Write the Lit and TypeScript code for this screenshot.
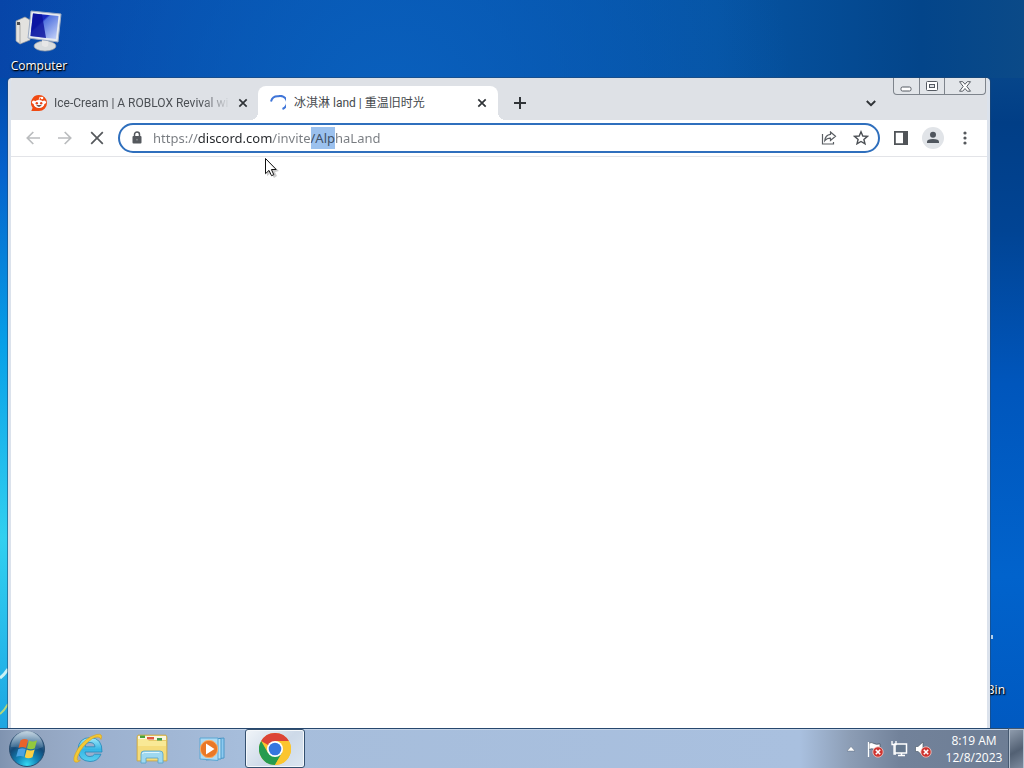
import { LitElement, html, css, svg } from "lit";
import { customElement, query } from "lit/decorators.js";

const closeIcon = html`<svg width="10" height="10" viewBox="0 0 10 10" aria-hidden="true">
  <path d="M1.3 1.3 8.7 8.7M8.7 1.3 1.3 8.7" stroke="#303438" stroke-width="1.7" fill="none" />
</svg>`;

const redBadge = svg`
  <circle cx="12" cy="12" r="5.2" fill="#cf3430" stroke="#f4c9c4" stroke-width=".8" />
  <path d="M9.8 9.8l4.4 4.4m0-4.4l-4.4 4.4" stroke="#fff" stroke-width="1.6" />`;

@customElement("browser-window")
class BrowserWindow extends LitElement {
  @query("input") address!: HTMLInputElement;

  static styles = css`
    :host {
      display: flex;
      flex-direction: column;
      box-sizing: border-box;
      border: solid #dbe2ec;
      border-width: 0 3px;
      border-radius: 4px 4px 0 0;
      background: #fff;
      box-shadow: 0 0 0 1px #24476f90;
      overflow: hidden;
    }
    button {
      border: 0;
      padding: 0;
      margin: 0;
      background: none;
      display: grid;
      place-items: center;
      flex: none;
      font: inherit;
    }
    svg {
      display: block;
      flex: none;
    }
    .strip {
      display: flex;
      background: #dee1e6;
      height: 42px;
      margin: 0 -3px;
      padding-left: 12px;
      flex: none;
    }
    .tabs {
      display: flex;
      align-items: flex-end;
      flex: 1;
      min-width: 0;
    }
    .tab {
      position: relative;
      display: flex;
      align-items: center;
      box-sizing: border-box;
      width: 240px;
      height: 34px;
      padding: 0 10px 0 12px;
      gap: 8px;
      font: 12px "Roboto", "Noto Sans CJK SC", sans-serif;
      color: #4b4f54;
    }
    .tab.idle {
      width: 238px;
      padding: 0 9px 0 11px;
      gap: 7px;
    }
    .tab.active {
      background: #fff;
      border-radius: 8px 8px 0 0;
      color: #45494d;
    }
    .tab.active::before,
    .tab.active::after {
      content: "";
      position: absolute;
      bottom: 0;
      width: 8px;
      height: 8px;
    }
    .tab.active::before {
      right: 100%;
      background: radial-gradient(circle at 0 0, transparent 8px, #fff 8px);
    }
    .tab.active::after {
      left: 100%;
      background: radial-gradient(circle at 100% 0, transparent 8px, #fff 8px);
    }
    .title {
      flex: 1;
      min-width: 0;
      overflow: hidden;
      white-space: nowrap;
      line-height: 20px;
    }
    .idle .title {
      mask-image: linear-gradient(to right, #000 calc(100% - 28px), transparent);
    }
    .tab button {
      width: 12px;
      height: 16px;
    }
    .new {
      width: 28px;
      height: 34px;
      margin-left: 8px;
    }
    .search {
      width: 28px;
      height: 28px;
      margin: 11px 8px 0 0;
    }
    .caption {
      display: flex;
      box-sizing: border-box;
      height: 17px;
      margin-right: 4px;
      border: 1px solid #7e848c;
      border-top: 0;
      border-radius: 0 0 4px 4px;
      background: #e2e5e9;
    }
    .caption button {
      width: 25px;
    }
    .caption button + button {
      border-left: 1px solid #7e848c;
    }
    .caption .shut {
      width: 41px;
    }
    .toolbar {
      display: flex;
      align-items: center;
      height: 36px;
      flex: none;
      padding: 0 6px;
      border-bottom: 1px solid #e3e4e8;
    }
    .toolbar > button {
      width: 32px;
      height: 32px;
    }
    .omnibox {
      display: flex;
      align-items: center;
      flex: 1;
      min-width: 0;
      box-sizing: border-box;
      height: 30px;
      margin: 0 5px;
      padding: 0 5px 0 11px;
      gap: 8px;
      border: 2px solid #2f6fbd;
      border-radius: 16px;
    }
    .omnibox > svg {
      margin-right: 2px;
    }
    .omnibox > button {
      width: 24px;
      height: 24px;
    }
    input {
      flex: 1;
      min-width: 0;
      height: 22px;
      border: 0;
      outline: 0;
      padding: 0;
      font: 13px/22px "Noto Sans", "Open Sans", sans-serif;
      caret-color: transparent;
      color: #70757a;
      -webkit-text-fill-color: transparent;
      background: linear-gradient(to right, #777b80 45px, #24272b 45px 119px, #777b80 119px);
      background-clip: text;
      -webkit-background-clip: text;
    }
    input::selection {
      background: #9bc1ee;
      color: #3f5168;
      -webkit-text-fill-color: #3f5168;
    }
    main {
      flex: 1;
      background: #fff;
    }
  `;

  firstUpdated() {
    this.address.focus();
    const start = this.address.value.indexOf("/Alp");
    this.address.setSelectionRange(start, start + 4);
  }

  render() {
    return html`
      <div class="strip">
        <div class="tabs" role="tablist">
          <div class="tab idle" role="tab" aria-selected="false">
            <svg width="16" height="16" viewBox="0 0 16 16" aria-hidden="true">
              <path d="M8 0a8 8 0 0 0-6.4 12.8L.3 16H8A8 8 0 0 0 8 0Z" fill="#f04a12" />
              <circle cx="2.8" cy="7.2" r="1.8" fill="#fff" /><circle cx="13.2" cy="7.2" r="1.8" fill="#fff" />
              <circle cx="11" cy="3" r="1.3" fill="#fff" />
              <path d="M8 5.2 8.8 2.2 11 3" fill="none" stroke="#fff" stroke-width=".8" />
              <ellipse cx="8" cy="9" rx="5.4" ry="4" fill="#fff" />
              <circle cx="5.8" cy="8.3" r="1.2" fill="#e7441a" /><circle cx="10.2" cy="8.3" r="1.2" fill="#e7441a" />
              <path d="M5.2 10.3h5.6Q8 13 5.2 10.3Z" fill="#3a2522" />
            </svg>
            <span class="title">Ice-Cream | A ROBLOX Revival wi</span>
            <button aria-label="Close tab">${closeIcon}</button>
          </div>
          <div class="tab active" role="tab" aria-selected="true">
            <svg width="16" height="16" viewBox="0 0 16 16" aria-hidden="true">
              <path d="M1 6.5A7 7 0 0 1 8 1.3 6.5 6.5 0 0 1 12.500 14" fill="none" stroke="#3f75d8" stroke-width="2" />
            </svg>
            <span class="title">冰淇淋 land | 重温旧时光</span>
            <button aria-label="Close tab">${closeIcon}</button>
          </div>
          <button class="new" aria-label="New tab">
            <svg width="12" height="12" viewBox="0 0 12 12"><path d="M6 0v12M0 6h12" stroke="#303438" stroke-width="2" /></svg>
          </button>
        </div>
        <button class="search" aria-label="Search tabs">
          <svg width="10" height="7" viewBox="0 0 10 7"><path d="M.8 1 5 5.2 9.2 1" fill="none" stroke="#303438" stroke-width="2" /></svg>
        </button>
        <div class="caption">
          <button aria-label="Minimize">
            <svg width="13" height="13" viewBox="0 0 13 13"><rect x="1" y="7" width="10" height="4" rx="1.5" fill="#fff" stroke="#555a62" /></svg>
          </button>
          <button aria-label="Maximize">
            <svg width="13" height="11" viewBox="0 0 13 11">
              <rect x=".5" y=".5" width="11" height="9" rx="1" fill="#fff" stroke="#555a62" />
              <rect x="3.5" y="3.5" width="5" height="3" fill="#dee1e6" stroke="#555a62" />
            </svg>
          </button>
          <button class="shut" aria-label="Close">
            <svg width="13" height="11" viewBox="0 0 13 11">
              <path d="M.5.7h3.2L6 3.3 8.3.7h3.2L7.8 5.4l3.7 4.800H8.300L6 7.500 3.700 10.200H.5l3.700-4.800Z" fill="#fff" stroke="#555a62" />
            </svg>
          </button>
        </div>
      </div>
      <div class="toolbar">
        <button aria-label="Back">
          <svg width="14" height="14" viewBox="0 0 14 14"><path d="M14 7H1.5M7.3 1 1.3 7l6 6" fill="none" stroke="#babcbe" stroke-width="1.7" /></svg>
        </button>
        <button aria-label="Forward">
          <svg width="14" height="14" viewBox="0 0 14 14"><path d="M0 7h12.5M6.7 1l6 6-6 6" fill="none" stroke="#babcbe" stroke-width="1.7" /></svg>
        </button>
        <button aria-label="Stop">
          <svg width="14" height="14" viewBox="0 0 14 14"><path d="m1.2 1.2 11.6 11.6m0-11.6L1.2 12.8" stroke="#55585c" stroke-width="1.7" /></svg>
        </button>
        <div class="omnibox">
          <svg width="12" height="14" viewBox="0 0 12 14" aria-hidden="true">
            <path d="M3.5 6V3.6a2.5 2.5 0 0 1 5 0V6" fill="none" stroke="#55595e" stroke-width="1.5" />
            <rect x="1.5" y="5" width="9" height="7.5" rx="1" fill="#55595e" />
            <circle cx="6" cy="8.7" r=".9" fill="#888c90" />
          </svg>
          <input type="text" aria-label="Address" spellcheck="false" value="https://discord.com/invite/AlphaLand" />
          <button aria-label="Share">
            <svg width="16" height="16" viewBox="0 0 16 16">
              <path d="M1.5 4V14h11v-2M9.5 2l5 4.200-5 4.200V8.200Q6 8 3.800 10.600 4.300 5 9.500 4.400Z" fill="none" stroke="#5a5e63" stroke-width="1.2" />
            </svg>
          </button>
          <button aria-label="Bookmark">
            <svg width="16" height="16" viewBox="0 0 16 16">
              <path d="m8 1.800 1.800 4.200 4.600.4-3.500 3 1.100 4.500L8 11.500l-4 2.400 1.100-4.500-3.500-3 4.600-.4Z" fill="none" stroke="#4c5055" stroke-width="1.4" />
            </svg>
          </button>
        </div>
        <button aria-label="Side panel">
          <svg width="14" height="14" viewBox="0 0 14 14"><path d="M0 0h14v14H0Zm1.800 1.800v10.400H9V1.800Z" fill="#505458" fill-rule="evenodd" /></svg>
        </button>
        <button aria-label="Profile">
          <svg width="22" height="22" viewBox="0 0 22 22">
            <circle cx="11" cy="11" r="11" fill="#e1e4e8" />
            <circle cx="11" cy="7.800" r="3" fill="#50565e" />
            <path d="M5 16v-1.200Q5 12 11 12t6 2.800V16Z" fill="#50565e" />
          </svg>
        </button>
        <button aria-label="Menu">
          <svg width="4" height="14" viewBox="0 0 4 14" fill="#55585c"><circle cx="2" cy="2" r="1.6" /><circle cx="2" cy="7" r="1.6" /><circle cx="2" cy="12" r="1.6" /></svg>
        </button>
      </div>
      <main></main>
    `;
  }
}

@customElement("task-bar")
class TaskBar extends LitElement {
  static styles = css`
    :host {
      display: flex;
      box-sizing: border-box;
      height: 40px;
      border-top: 1px solid #2c4b6c;
      box-shadow: inset 0 1px #c5d5e9;
      background: linear-gradient(to right, #7f93b0 0, #91a3be 30px, #9cb1cf 100px, #a6bddb 240px, #a9c0df 800px, #8c9db5 850px, #72829a 900px, #6d7d94 100%);
    }
    button {
      border: 0;
      padding: 0;
      background: none;
      display: grid;
      place-items: center;
      flex: none;
    }
    svg {
      display: block;
    }
    .start {
      width: 54px;
    }
    .pin {
      width: 60px;
    }
    .first {
      width: 68px;
    }
    .open {
      width: 60px;
      margin-left: 3px;
      box-sizing: border-box;
      border: 1px solid #34506f;
      border-radius: 3px;
      background: linear-gradient(135deg, #f1f5f9, #cdd9e8 55%, #dce6f0);
      box-shadow: inset 0 0 0 1px #f5f8fb;
    }
    .tray {
      display: flex;
      align-items: center;
      margin-left: auto;
    }
    .tray button {
      width: 24px;
      height: 24px;
    }
    time {
      width: 70px;
      margin-left: 4px;
      text-align: center;
      font-size: 12px;
      line-height: 17px;
      color: #fff;
    }
    .tray .peek {
      width: 15px;
      height: 100%;
      box-sizing: border-box;
      border: solid #b3c0cf;
      border-width: 1px 1px 0;
      outline: 1px solid #465970;
      background: linear-gradient(150deg, #8e9bac, #526073 55%, #7d8b9e);
    }
  `;

  render() {
    return html`
      <button class="start" aria-label="Start">
        <svg width="38" height="38" viewBox="0 0 38 38">
          <defs>
            <radialGradient id="orb" cx="50%" cy="95%" r="85%">
              <stop offset="0" stop-color="#35d9f2" /><stop offset=".35" stop-color="#1387ba" />
              <stop offset=".7" stop-color="#134a78" /><stop offset="1" stop-color="#517697" />
            </radialGradient>
            <linearGradient id="gloss" x1="0" y1="0" x2="0" y2="1">
              <stop offset="0" stop-color="#e4f0f7" stop-opacity=".8" /><stop offset="1" stop-color="#9fc0d8" stop-opacity=".15" />
            </linearGradient>
          </defs>
          <circle cx="19" cy="19" r="17.5" fill="url(#orb)" stroke="#294d6f" />
          <path d="M3 17A16 16 0 0 1 35 17Q27 21 19 19T3 17Z" fill="url(#gloss)" />
          <path d="M12.500 10.500q4-2.500 7.500-.5l-2 8q-3.500-2-7.500 0Z" fill="#e8632a" />
          <path d="M21 10.500q4 2 8-.3l-2.200 8q-4 2.200-7.800.1Z" fill="#93c83e" />
          <path d="M10.200 19.200q4-2 7.500-.1l-2 7.700q-3.500-1.800-7.500 0Z" fill="#4ba3e3" />
          <path d="M18.700 19.500q4 2 8-.1l-2.200 7.800q-4 2.200-7.800.1Z" fill="#fbd045" />
        </svg>
      </button>
      <button class="pin first" aria-label="Internet Explorer">
        <svg width="32" height="34" viewBox="0 0 32 34">
          <defs><linearGradient id="ie" x1="0" y1="0" x2="0" y2="1"><stop offset="0" stop-color="#a4eafa" /><stop offset=".5" stop-color="#35b5e5" /><stop offset="1" stop-color="#5bd0ef" /></linearGradient></defs>
          <path d="M30 20H13q.3 4.500 5 4.500 3.200 0 4.500-2.300H29Q26 29.500 18 29.500 6.500 29 6 17.500 6.500 6 18 5.500 30.500 6 30 20ZM13 14.800h10q-.4-4.300-5-4.300t-5 4.300Z" fill="url(#ie)" stroke="#2587b7" stroke-width=".8" fill-rule="evenodd" />
          <path d="M29 7.500Q31.500 1 24.500 2.500 13.500 5.500 6 16.500-.5 27.500 3 30q2.500 1 5.300-1.500-4.500 1-2.500-4.500Q10 13.500 20.500 6.500 27.500 3 29 7.500Z" fill="#f4c934" stroke="#d29e23" stroke-width=".6" />
        </svg>
      </button>
      <button class="pin" aria-label="Windows Explorer">
        <svg width="34" height="32" viewBox="0 0 34 32">
          <path d="M2 4 3 2h28l1 2v24H2Z" fill="#e8cb69" stroke="#c4a449" stroke-width=".7" />
          <path d="M3 3h28v4H3Z" fill="#faf6df" />
          <path d="M5 2.500h5v2.500H5Z" fill="#49a23c" /><path d="M12 4h7v2.500h-7Z" fill="#df5840" /><path d="M22 5h5v2.500h-5Z" fill="#3f9b4a" />
          <path d="M3 6h9l2 2h17v19H3Z" fill="#f9e996" />
          <path d="M3 13h28v14H3Z" fill="#f5dc7b" />
          <path d="M6 30v-9q0-3 3-3h16q3 0 3 3v9h-5v-5H11v5Z" fill="#9ed8f0" stroke="#56a2c6" stroke-width=".8" />
          <path d="M7.500 21q0-1.500 2-1.500h15" stroke="#e0f6fd" fill="none" />
        </svg>
      </button>
      <button class="pin" aria-label="Windows Media Player">
        <svg width="30" height="28" viewBox="0 0 30 28">
          <path d="M9 4.500 27 3v20l-18 2Z" fill="#8dcaf0" stroke="#4b97c7" />
          <path d="M6 3.500h18V24H6Z" fill="#b8e1f6" stroke="#4b97c7" />
          <path d="M3 3h18v22.500L3 24Z" fill="#acdaf4" stroke="#5ba6d2" />
          <circle cx="12" cy="14" r="8.700" fill="#ea7826" stroke="#fab067" />
          <path d="M9 8.500 17.500 14 9 19.500Z" fill="#fff" />
        </svg>
      </button>
      <button class="open" aria-label="Google Chrome">
        <svg width="32" height="32" viewBox="0 0 32 32">
          <circle cx="16" cy="16" r="16" fill="#fbc52e" />
          <path d="M16 16 2.140 8A16 16 0 0 1 29.860 8H16Z" fill="#dc4437" />
          <path d="M2.140 8A16 16 0 0 0 16 32l6.930-12L16 16 9.070 20Z" fill="#269b4f" />
          <path d="M16 8h13.860A16 16 0 0 1 16 32l6.930-12Z" fill="#fbc52e" />
          <circle cx="16" cy="16" r="8" fill="#fff" /><circle cx="16" cy="16" r="6.300" fill="#3676df" />
        </svg>
      </button>
      <div class="tray">
        <button aria-label="Show hidden icons">
          <svg width="10" height="6" viewBox="0 0 10 6"><path d="M5 .5 9 5H1Z" fill="#fff" stroke="#4e5e70" stroke-width=".4" /></svg>
        </button>
        <button aria-label="Action Center">
          <svg width="18" height="18" viewBox="0 0 18 18">
            <path d="M3 3q3-1 5 .5t6 .3v6q-4 .7-6-.5t-5 .2Z" fill="#fff" stroke="#3f4b59" stroke-width=".7" /><path d="M2.500 2v15" stroke="#fff" stroke-width="1.300" />${redBadge}
          </svg>
        </button>
        <button aria-label="Network">
          <svg width="18" height="18" viewBox="0 0 18 18">
            <path d="M5 4h11.500v9H5ZM8 15.500h7M11.500 13v2.500" fill="#66788e" stroke="#fff" stroke-width="1.500" />
            <path d="M2 1v3.500h4V1M4 4.500V14h2" fill="none" stroke="#fff" stroke-width="1.300" />
          </svg>
        </button>
        <button aria-label="Volume muted">
          <svg width="18" height="18" viewBox="0 0 18 18">
            <path d="M1.500 6.500H4L9 2v14l-5-4.500H1.500Z" fill="#fff" stroke="#52606e" stroke-width=".7" />${redBadge}
          </svg>
        </button>
        <time datetime="2023-12-08T08:19">8:19 AM<br />12/8/2023</time>
        <button class="peek" aria-label="Show desktop"></button>
      </div>
    `;
  }
}

@customElement("app-root")
class AppRoot extends LitElement {
  static styles = css`
    :host {
      position: relative;
      display: flex;
      flex-direction: column;
      height: 100vh;
      overflow: hidden;
      font-family: "Open Sans", "Noto Sans", "Noto Sans CJK SC", sans-serif;
      background:
        linear-gradient(to bottom, transparent 78px, #0149aa 78px, #0561cb 22%, #07a0e8 45%, #31d0f0 70%, #25b9ea 84%, #1a9cdd 100%) 0 0 / 8px 100% no-repeat,
        linear-gradient(to bottom, transparent 78px, #06458a 78px, #013e86 16%, #014494 30%, #0056bc 50%, #0163cc 75%, #0057be 100%) 100% 0 / 34px 100% no-repeat,
        radial-gradient(ellipse at 38% 110px, #0a60bd 0, #075bb100 45%),
        linear-gradient(to right, #0745a8, #0450ac 35%, #0654a3 70%, #03458a 90%, #0b4a88);
    }
    .desktop {
      position: relative;
      flex: 1;
      min-height: 0;
    }
    .shortcut {
      position: absolute;
      display: flex;
      flex-direction: column;
      align-items: center;
      font-size: 12px;
      line-height: 16px;
      color: #fff;
      text-decoration: none;
      text-shadow: 0 1px 2px #000, 1px 1px 1px #000;
    }
    .computer {
      left: 4px;
      top: 8px;
      width: 70px;
      gap: 2px;
    }
    .bin {
      right: 19px;
      bottom: 30px;
      white-space: nowrap;
    }
    .leaf {
      position: absolute;
      left: 0;
      bottom: 0;
    }
    .glint {
      position: absolute;
      right: 31px;
      bottom: 89px;
      width: 2px;
      height: 4px;
      background: #b4d0ea;
    }
    browser-window {
      position: absolute;
      inset: 78px 34px 0 8px;
    }
    .pointer {
      position: absolute;
      left: 264px;
      top: 157px;
    }
  `;

  render() {
    return html`
      <div class="desktop">
        <a class="shortcut computer" href="#computer">
          <svg width="48" height="48" viewBox="0 0 48 48" aria-hidden="true">
            <defs><linearGradient id="screen" x1="0" y1="0" x2="1" y2="1"><stop offset="0" stop-color="#1020b5" /><stop offset=".35" stop-color="#1828c0" /><stop offset=".4" stop-color="#5374df" /><stop offset="1" stop-color="#cbd8fa" /></linearGradient></defs>
            <path d="m1 13 9-4 5 3v20L5 36l-4-3Z" fill="#e3e2df" stroke="#9a9b9c" stroke-width=".7" />
            <path d="m2 14 3 1v20" fill="none" stroke="#aaa9a7" /><path d="M2 14h3v3H2Z" fill="#4a4c51" />
            <ellipse cx="30" cy="38" rx="11" ry="5" fill="#d9dcde" stroke="#9ba0a5" stroke-width=".7" />
            <path d="m27 29 7 1-1 8q-3 2-6-.5Z" fill="#e7e7e7" />
            <path d="M16 3 46 6 43 34 13 30Z" fill="#e7ebf0" stroke="#9cabc3" />
            <path d="M18 5.500 43.500 8 41 31 15.500 28Z" fill="url(#screen)" />
            <path d="M18 5.500 27 6.400 31 30 15.500 28Z" fill="#0a119b" opacity=".8" />
          </svg>
          Computer
        </a>
        <a class="shortcut bin" href="#recycle-bin">Recycle Bin</a>
        <span class="glint"></span>
        <svg class="leaf" width="8" height="60" viewBox="0 0 8 60" aria-hidden="true">
          <path d="M0 10Q4 7 8 1" fill="none" stroke="#c9f1f5" stroke-width="3" />
          <path d="M0 46Q4 43 8 36" fill="none" stroke="#b4d77c" stroke-width="2" />
        </svg>
        <browser-window></browser-window>
        <svg class="pointer" width="16" height="22" viewBox="0 0 16 22" aria-hidden="true">
          <path d="M3 3v16l4-3 3 5 3-2-2-4 4-1Z" fill="#0003" />
          <path d="M1.500 1.500v15.200L5 13.400l2.500 5.300 2.300-1-2.400-5.200h4.800Z" fill="#fff" stroke="#111" />
        </svg>
      </div>
      <task-bar></task-bar>
    `;
  }
}
